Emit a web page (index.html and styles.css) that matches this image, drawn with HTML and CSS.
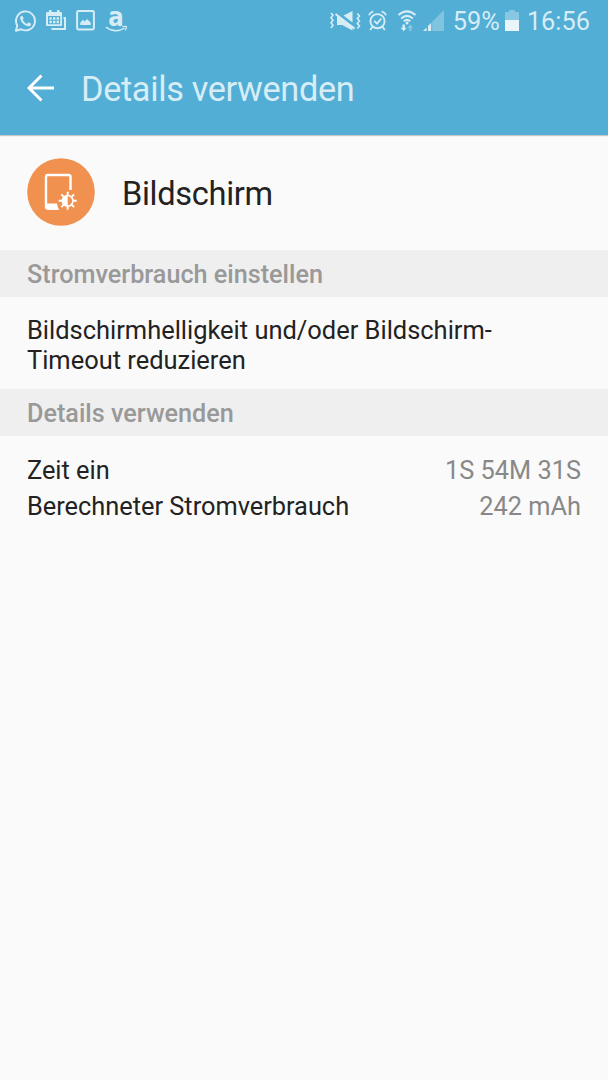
FILE: index.html
```html
<!DOCTYPE html>
<html lang="de">
<head>
  <meta charset="UTF-8">
  <meta name="viewport" content="width=device-width, initial-scale=1.0">
  <title>Details verwenden</title>
  <link rel="stylesheet" href="styles.css">
</head>
<body>
  <header class="header">
    <div class="status-bar">
      <div class="status-left">
        <!-- WhatsApp -->
        <svg width="23" height="24" viewBox="0 0 24 24">
          <path d="M2 22.2 L3.4 16.7 A9.9 9.9 0 1 1 7.4 20.6 Z" fill="none" stroke="currentColor" stroke-width="2" stroke-linejoin="round"/>
          <path d="M8.6 6.6 C8 6.2 6.5 7 6.5 9 C6.9 13 11 17 15.4 17.4 C17.3 17.2 18.1 15.8 17.8 14.8 L15.2 13.4 L13.7 15 C11.6 14.2 10 12.6 9 10.7 L10.2 9.3 Z" fill="currentColor"/>
        </svg>
        <!-- Calendar -->
        <svg width="21" height="21" viewBox="0 0 21 21">
          <path d="M1.5 2 H3 V0 H5.5 V2 H11 V0 H13.5 V2 H15 Q16 2 16 3 V15 Q16 16 15 16 H1 Q0 16 0 15 V3 Q0 2 1.5 2 Z M2 6 V14.3 H14.2 V6 Z" fill="currentColor" fill-rule="evenodd"/>
          <path d="M3.4 7.3h2.4v2.4H3.4z M7 7.3h2.4v2.4H7z M10.6 7.3H13v2.4h-2.4z M3.4 10.8h2.4v2.4H3.4z M7 10.8h2.4v2.4H7z M10.6 10.8H13v2.4h-2.4z" fill="currentColor"/>
          <path d="M17.5 8 H19 V19 H5.5" fill="none" stroke="currentColor" stroke-width="2"/>
        </svg>
        <!-- Picture -->
        <svg width="19" height="21" viewBox="0 0 19 21">
          <rect x="1.1" y="1.1" width="16.8" height="18.3" rx="1.3" fill="none" stroke="currentColor" stroke-width="2"/>
          <path d="M4.3 15 V12.4 L7 9.8 L8.6 11.5 L11 9 L14.7 12.6 V15 Z" fill="currentColor"/>
        </svg>
        <!-- Amazon -->
        <svg class="amazon" width="23" height="40" viewBox="0 -8 23 40">
          <text x="3.2" y="17.3" textLength="15.5" lengthAdjust="spacingAndGlyphs">a</text>
          <path d="M.7 18 Q10.5 25 19.5 19" fill="none" stroke="currentColor" stroke-width="1.4"/>
          <path d="M17.3 17.8 Q21.8 16.8 21.6 18.1 Q21.3 20 20 21.3" fill="none" stroke="currentColor" stroke-width="1.1"/>
        </svg>
      </div>
      <div class="status-right">
        <!-- Vibrate -->
        <svg class="vibrate" width="31" height="22" viewBox="0 0 31 22">
          <path d="M1 3 L3 5.3 L1 7.8 L3 10.3 L1 12.8 L3 15.3 L1 18 M27.3 3.5 L29.5 6 L27.3 8.5 L29.5 11 L27.3 13.5 L29.5 16 L27.3 18.5" fill="none" stroke="currentColor" stroke-width="1.6"/>
          <path d="M13.5 5.6 L22.5 1 V12.5 Z M7 6.5 H9.2 L22.5 16.6 V20.5 L12.2 15 H7 Z" fill="currentColor"/>
          <path d="M5.5 4 L24.5 18.6" stroke="currentColor" stroke-width="2"/>
        </svg>
        <!-- Alarm -->
        <svg class="alarm" width="19" height="22" viewBox="0 0 19 22">
          <circle cx="9.5" cy="11.2" r="7.1" fill="none" stroke="currentColor" stroke-width="1.9"/>
          <path d="M6.2 10.8 L9 13.6 L13.3 8.7 M4.5 16.7 L2.2 20 M14.5 16.7 L16.8 20" fill="none" stroke="currentColor" stroke-width="1.8"/>
          <path d="M.9 5.2 Q2 2.3 5.3 1.3 M18.1 5.2 Q17 2.3 13.7 1.3" fill="none" stroke="currentColor" stroke-width="1.8"/>
        </svg>
        <!-- Wi-Fi -->
        <svg class="wifi" width="20" height="22" viewBox="0 0 20 22">
          <path d="M1.5 5 Q10 -2.2 18.5 5 M4.2 8.4 Q10 3.3 15.8 8.4 M6.8 11.3 Q10 8.5 13.2 11.3" fill="none" stroke="currentColor" stroke-width="2"/>
          <circle cx="10" cy="13" r="1.5" fill="currentColor"/>
          <path d="M5.5 14.5 H7.9 V17.8 H9.7 L6.7 21.2 L3.7 17.8 H5.5 Z" fill="currentColor"/>
          <path d="M12.1 21 H14.5 V17.8 H16.3 L13.3 14.5 L10.3 17.8 H12.1 Z" fill="currentColor" opacity=".4"/>
        </svg>
        <!-- Signal -->
        <svg class="signal" width="21" height="21" viewBox="0 0 21 21">
          <path d="M9.2 11.8 L21 0 V21 H9.2 Z" fill="currentColor" opacity=".35"/>
          <path d="M0 21 L3.6 17.4 V21 Z M5 16 L8.2 12.8 V21 H5 Z" fill="currentColor"/>
        </svg>
        <span class="percent">59%</span>
        <!-- Battery -->
        <svg class="battery" width="14" height="21" viewBox="0 0 14 21">
          <path d="M0 2 H4 V0 H10 V2 H14 V10 H0 Z" fill="currentColor" opacity=".4"/>
          <path d="M0 10 H14 V21 H0 Z" fill="#e9f5fa"/>
        </svg>
        <span class="clock">16:56</span>
      </div>
    </div>
    <div class="title-bar">
      <svg width="28" height="28" viewBox="0 0 28 28">
        <path d="M27 14 H2 M14.5 1.5 L2 14 L14.5 26.5" fill="none" stroke="#fff" stroke-width="3"/>
      </svg>
      <h1>Details verwenden</h1>
    </div>
  </header>

  <main>
    <div class="app">
      <svg width="68" height="68" viewBox="0 0 68 68">
        <circle cx="34" cy="34" r="33.8" fill="#f09150"/>
        <path d="M43.5 32 V19 Q43.5 17 41.5 17 H21 Q19 17 19 19 V48.5 Q19 50.5 21 50.5 H31" fill="none" stroke="#fff" stroke-width="2.4"/>
        <path d="M19 45.5 H30 Q30.2 49 32.2 51.7 H20 Z" fill="#fff"/>
        <circle cx="40.7" cy="42.8" r="5.3" fill="none" stroke="#fff" stroke-width="1.7"/>
        <path d="M40.7 37 A5.8 5.8 0 0 0 40.7 48.6 Z" fill="#fff"/>
        <path d="M40.7 33.8 V37 M40.7 48.6 V51.8 M31.7 42.8 H35 M46.4 42.8 H49.7 M34.3 36.4 L36.6 38.7 M44.8 46.9 L47.1 49.2 M47.1 36.4 L44.8 38.7 M36.6 46.9 L34.3 49.2" stroke="#fff" stroke-width="1.9"/>
      </svg>
      <h2>Bildschirm</h2>
    </div>

    <h3 class="section">Stromverbrauch einstellen</h3>
    <p class="hint">Bildschirmhelligkeit und/oder Bildschirm-<br>Timeout reduzieren</p>

    <h3 class="section">Details verwenden</h3>
    <div class="details">
      <div class="row"><span>Zeit ein</span><span class="value">1S 54M 31S</span></div>
      <div class="row"><span>Berechneter Stromverbrauch</span><span class="value">242 mAh</span></div>
    </div>
  </main>
</body>
</html>
```
FILE: styles.css
```css
body {
  margin: 0;
  min-height: 100vh;
  background-color: #fafafa;
  color: #222;
  font-family: Roboto, sans-serif;
  font-size: 25.35px;
}

h1, h2, h3, p {
  margin: 0;
  font-weight: 400;
}

svg {
  display: block;
  flex: none;
}

.header {
  height: 135px;
  background-color: #52aed5;
  color: #d7edf6;
  box-shadow: 0 1px 1px rgba(0, 0, 0, 0.2);
}

/* Status bar */
.status-bar {
  display: flex;
  justify-content: space-between;
  align-items: center;
  height: 41px;
  padding: 0 18px 0 14px;
}

.status-left,
.status-right {
  display: flex;
  align-items: center;
}

.status-left {
  gap: 9px;
}

.amazon {
  margin-left: 1px;
}

.amazon text {
  font: bold 27px/1 "DejaVu Sans", sans-serif;
  fill: currentColor;
}

.vibrate {
  margin-right: 1px;
}

.alarm {
  margin-left: 6px;
}

.wifi {
  margin-left: 10px;
}

.signal {
  margin-left: 6px;
}

.percent,
.clock {
  line-height: 30px;
}

.percent {
  margin-left: 9px;
}

.battery {
  margin-left: 5px;
}

.clock {
  margin-left: 8px;
}

/* Title */
.title-bar {
  display: flex;
  align-items: center;
  height: 94px;
  padding-left: 27px;
}

h1 {
  margin-left: 26px;
  padding-top: 2px;
  font-size: 34.3px;
  letter-spacing: -0.35px;
}

/* Content */
.app {
  display: flex;
  align-items: center;
  height: 114.55px;
  padding-left: 27px;
}

h2 {
  margin-left: 27px;
  padding-top: 3px;
  font-size: 32.6px;
  letter-spacing: -0.3px;
}

.section {
  height: 47px;
  padding-left: 27px;
  background-color: #efefef;
  color: #999;
  font-size: 25.2px;
  font-weight: 500;
  line-height: 50.8px;
}

.hint {
  padding: 18px 27px 14.9px;
  font-size: 25.45px;
  line-height: 30px;
}

.details {
  padding: 15.8px 27px;
}

.row {
  display: flex;
  justify-content: space-between;
  line-height: 36px;
}

.value {
  color: #888;
}
```
